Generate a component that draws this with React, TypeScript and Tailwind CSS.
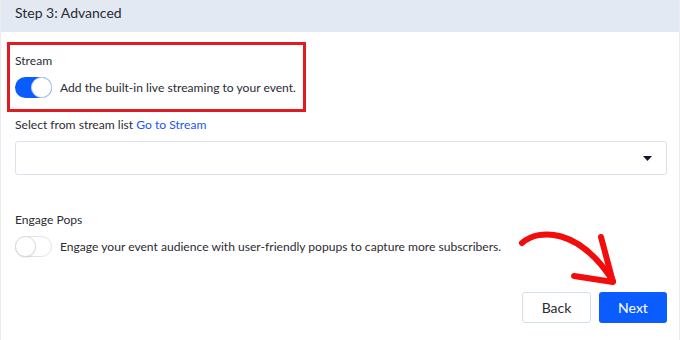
function Toggle({ on }: { on: boolean }) {
  return (
    <div
      className={
        on
          ? 'relative h-[21px] w-[37px] shrink-0 rounded-full bg-[#0b5cff]'
          : 'relative h-[21px] w-[37px] shrink-0 rounded-full border border-[#e2e2e2] bg-white'
      }
    >
      <div
        className={
          on
            ? 'absolute right-0 top-0 size-[21px] rounded-full border border-[#c9d3e6] bg-white'
            : 'absolute -left-px -top-px size-[21px] rounded-full border border-[#d9d9d9] bg-white shadow-[0_1px_1px_rgba(0,0,0,0.08)]'
        }
      />
    </div>
  )
}

export default function App() {
  return (
    <div
      className="relative h-[340px] w-[680px] overflow-hidden border-x border-[#ececf0] bg-white text-[12.1px] text-[#2b2b33]"
      style={{ fontFamily: 'Lato, "Open Sans", sans-serif' }}
    >
      {/* Header */}
      <div className="h-8 border-t border-[#e6e8ec] bg-[#e3e9f2] px-[14px] pt-[3px] text-[14px] leading-[18px] text-[#2a2a33]">
        Step 3: Advanced
      </div>

      <div className="flex flex-col px-[14px]">
        {/* Stream */}
        <div className="mt-[20px] leading-[18px]">Stream</div>
        <div className="mt-[7px] flex items-center gap-[8px]">
          <Toggle on />
          <span className="leading-[18px]">Add the built-in live streaming to your event.</span>
        </div>

        {/* Stream list */}
        <div className="mt-[18px] leading-[18px]">
          Select from stream list <span className="text-[#1a56f0]">Go to Stream</span>
        </div>
        <div className="mt-[7px] flex h-[34px] w-[652px] items-center justify-end rounded-[3px] border border-[#dbe3ec] pr-[14px]">
          <svg width="9" height="5" viewBox="0 0 9 5">
            <path d="M0 0 L9 0 L4.5 5 Z" fill="#16162a" />
          </svg>
        </div>

        {/* Engage Pops */}
        <div className="mt-[36px] leading-[18px]">Engage Pops</div>
        <div className="mt-[7px] flex items-center gap-[8px]">
          <Toggle on={false} />
          <span className="leading-[18px]">
            Engage your event audience with user-friendly popups to capture more subscribers.
          </span>
        </div>

        {/* Actions */}
        <div className="mt-[35px] flex w-[652px] justify-end gap-[8px]">
          <button className="h-[31px] w-[69px] rounded-[3px] border border-[#d3dfeb] bg-white text-[14px] text-[#2b2b33]">
            Back
          </button>
          <button className="h-[31px] w-[68px] rounded-[3px] bg-[#0b5cff] text-[14px] text-white">
            Next
          </button>
        </div>
      </div>

      {/* Annotation: red box */}
      <div className="pointer-events-none absolute left-[6px] top-[42px] h-[70px] w-[299px] border-[3px] border-[#e01b22]" />

      {/* Annotation: red arrow */}
      <svg
        className="pointer-events-none absolute left-0 top-0"
        width="680"
        height="340"
        viewBox="0 0 680 340"
      >
        <path
          d="M521 243 C 538 228, 578 228, 612 281"
          fill="none"
          stroke="#f20c0c"
          strokeWidth="6"
          strokeLinecap="round"
        />
        <path
          d="M600 237 L612 282 L573 276"
          fill="none"
          stroke="#f20c0c"
          strokeWidth="6"
          strokeLinecap="round"
          strokeLinejoin="round"
        />
      </svg>
    </div>
  )
}
